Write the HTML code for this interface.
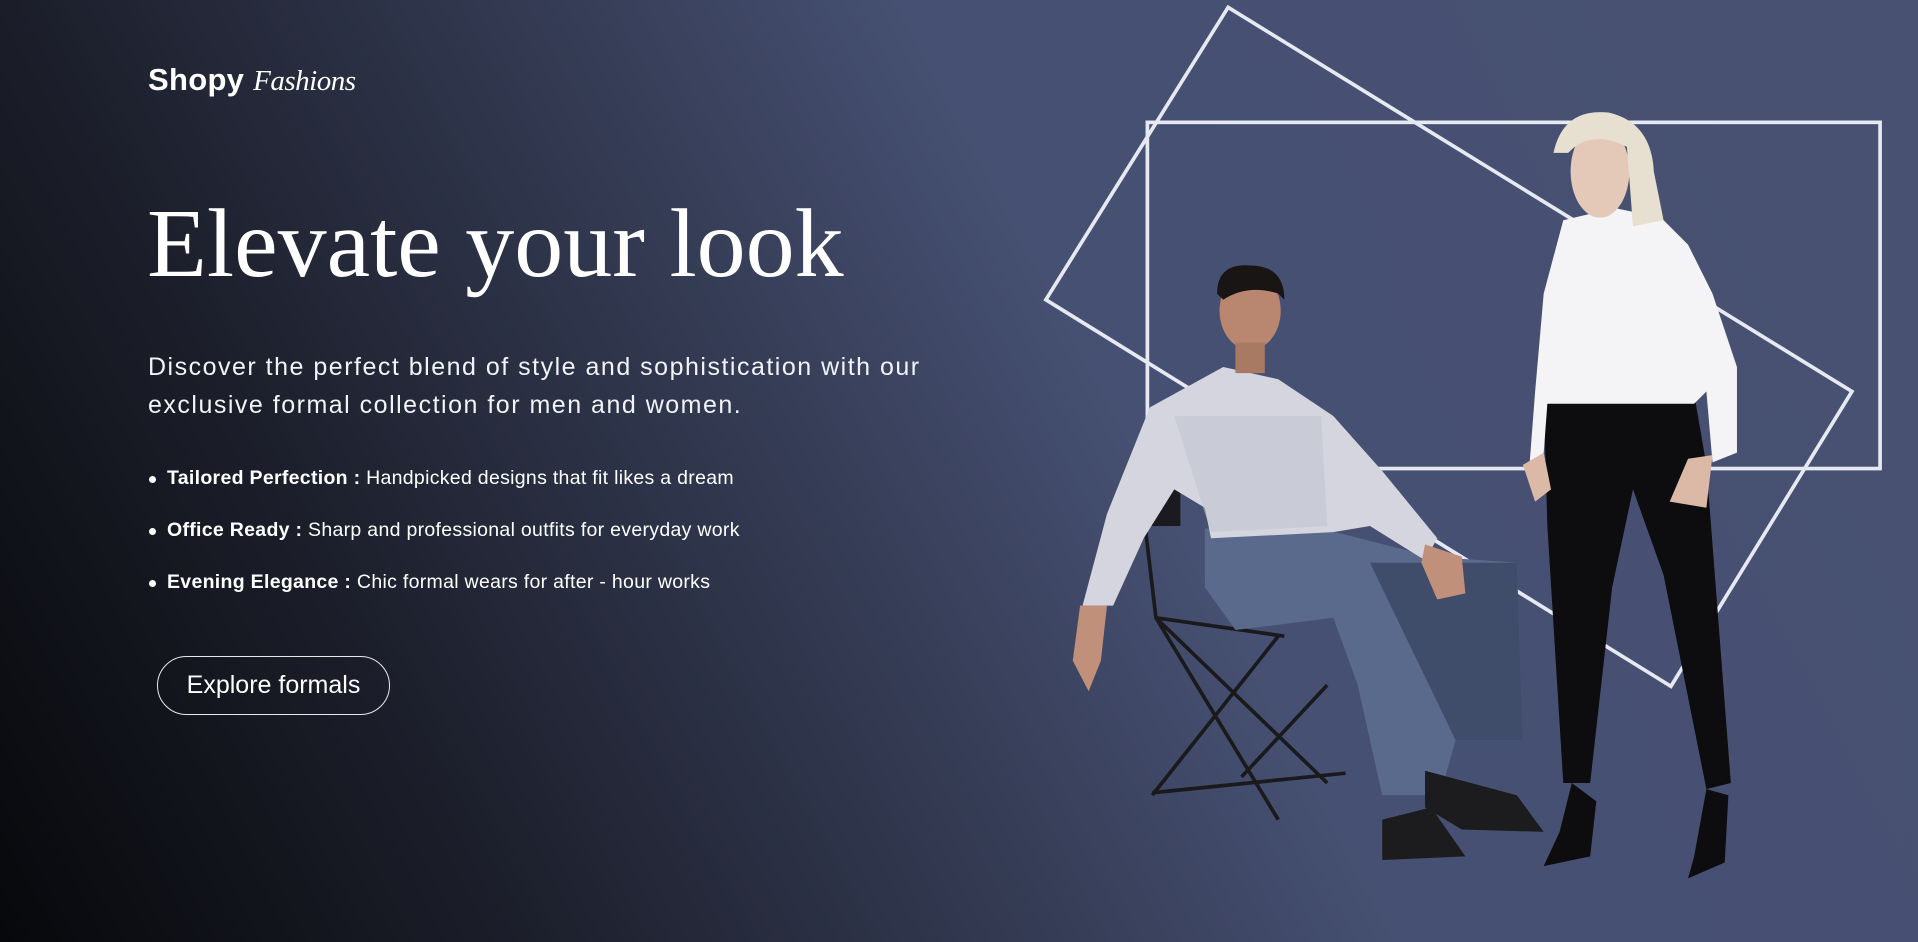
<!DOCTYPE html>
<html><head><meta charset="utf-8"><style>
*{margin:0;padding:0;box-sizing:border-box}
html,body{width:1918px;height:942px;overflow:hidden}
body{background:linear-gradient(62deg,#07080b 0%,#1c1f2b 22%,#333a52 42%,#465072 58%,#485171 100%);font-family:"Liberation Sans",sans-serif;color:#fff;position:relative}
.logo{position:absolute;left:148px;top:62px;font-size:31px;font-weight:bold;letter-spacing:0.3px}
.logo i{font-family:"Liberation Serif",serif;font-weight:normal;font-size:29px;letter-spacing:-0.5px}
h1{position:absolute;left:147px;top:188px;font-family:"Liberation Serif",serif;font-weight:normal;font-size:98px;letter-spacing:0;white-space:nowrap}
p.d{position:absolute;left:148px;top:348px;font-size:25px;letter-spacing:1.5px;line-height:38px;width:790px;color:#f2f3f7}
ul{position:absolute;left:148px;top:467px;list-style:none;font-size:19.5px;letter-spacing:0.3px}
li{height:52px;position:relative;padding-left:19px;white-space:nowrap}
li:before{content:"";position:absolute;left:1px;top:9px;width:7px;height:7px;border-radius:50%;background:#fff}
li b{font-weight:bold}
.btn{position:absolute;left:157px;top:656px;width:233px;height:59px;border:1.5px solid #e8e8ee;border-radius:30px;font-size:25px;line-height:56px;text-align:center}
svg{position:absolute;left:0;top:0}
</style></head><body>
<div class="logo">Shopy <i>Fashions</i></div>
<h1>Elevate your look</h1>
<p class="d">Discover the perfect blend of style and sophistication with our exclusive formal collection for men and women.</p>
<ul>
<li><b>Tailored Perfection :</b> Handpicked designs that fit likes a dream</li>
<li><b>Office Ready :</b> Sharp and professional outfits for everyday work</li>
<li><b>Evening Elegance :</b> Chic formal wears for after - hour works</li>
</ul>
<div class="btn">Explore formals</div>
<svg width="1918" height="942" viewBox="0 0 1568 770" preserveAspectRatio="none">
<g fill="none" stroke="#e6e9f1" stroke-width="3">
<rect x="938" y="100" width="599" height="283"/>
<polygon points="1004,6 1514,320 1366,561 855,245"/>
</g>
<g stroke="#1a1a1c" stroke-width="3" fill="none">
<path d="M960,360 Q928,360 932,395 L945,505 L1045,670"/>
<path d="M945,505 L1085,640 M1045,520 L942,650 M1085,560 L1015,635 M945,505 L1050,520 M942,648 L1100,632"/>
</g>
<rect x="935" y="390" width="30" height="40" fill="#1b1b1f"/>
<path d="M985,432 L1080,432 L1170,455 L1240,460 L1245,605 L1190,605 L1180,640 L1165,650 L1130,650 L1110,560 L1090,505 L1010,515 L985,480 Z" fill="#5a6a8c"/>
<path d="M1120,460 L1240,460 L1245,605 L1190,605 Z" fill="#3f4c6a"/>
<path d="M1165,630 L1240,650 L1262,680 L1195,678 L1165,660 Z" fill="#1c1c1e"/>
<path d="M1130,670 L1170,660 L1198,700 L1130,703 Z" fill="#1c1c1e"/>
<path d="M940,333 L1000,300 L1045,310 L1090,340 L1130,385 L1175,440 L1165,458 L1120,430 L1090,435 L990,440 L985,415 L960,400 L935,440 L910,495 L885,495 L905,420 Z" fill="#d4d5de"/>
<path d="M960,340 L1080,340 L1085,430 L990,435 Z" fill="#c2c4d0" opacity="0.6"/>
<ellipse cx="1022" cy="254" rx="25" ry="32" fill="#b98770"/>
<path d="M995,240 Q995,215 1022,217 Q1050,217 1050,245 L1045,240 Q1020,232 1000,245 Z" fill="#1a1515"/>
<rect x="1010" y="280" width="24" height="25" fill="#a97a63"/>
<path d="M1165,445 L1195,455 L1198,485 L1175,490 L1162,460 Z" fill="#c0907a"/>
<path d="M883,495 L905,495 L900,540 L890,565 L877,540 Z" fill="#c0907a"/>
<path d="M1262,325 L1385,322 L1395,380 L1415,640 L1395,645 L1360,470 L1335,400 L1318,480 L1300,640 L1278,640 L1265,430 Z" fill="#0d0d10"/>
<path d="M1285,640 L1305,655 L1300,700 L1262,708 L1275,680 Z" fill="#0d0d10"/>
<path d="M1395,645 L1413,650 L1410,705 L1380,718 L1385,700 Z" fill="#0d0d10"/>
<path d="M1278,180 L1320,170 L1358,178 L1380,200 L1400,240 L1420,300 L1420,370 L1400,378 L1395,320 L1385,330 L1265,330 L1262,370 L1250,385 L1255,320 L1262,240 Z" fill="#f4f4f6"/>
<ellipse cx="1308" cy="140" rx="24" ry="38" fill="#e4c9b9"/>
<path d="M1270,125 Q1278,88 1315,92 Q1350,100 1352,140 L1360,180 L1335,185 L1330,120 Q1300,105 1282,125 Z" fill="#e7dfcf"/>
<path d="M1245,380 L1262,370 L1268,400 L1255,410 Z" fill="#dcb9a7"/>
<path d="M1380,375 L1400,372 L1395,415 L1365,410 Z" fill="#dcb9a7"/>
</svg>
</body></html>
